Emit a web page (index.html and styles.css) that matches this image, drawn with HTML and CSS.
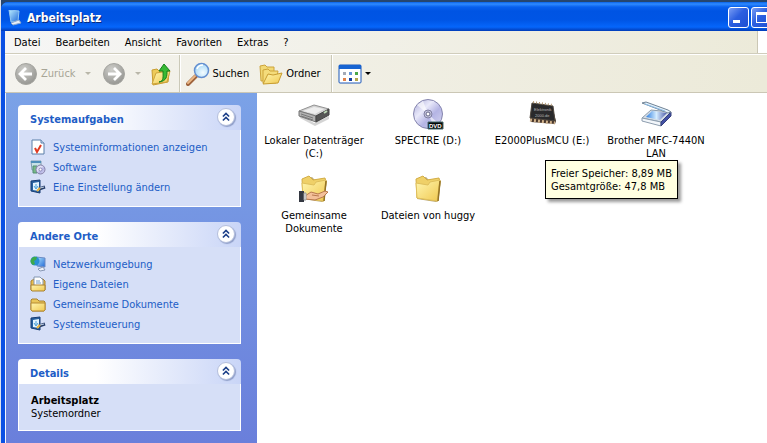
FILE: index.html
```html
<!DOCTYPE html>
<html lang="de">
<head>
  <meta charset="UTF-8">
  <title>Arbeitsplatz</title>
  <link rel="stylesheet" href="styles.css">
</head>
<body>

<!-- shared shapes and colours -->
<svg class="defs" aria-hidden="true">
  <defs>
    <linearGradient id="gold" x1="0" y1="0" x2="1" y2="1">
      <stop offset="0" stop-color="#fff6b0"/><stop offset="1" stop-color="#f0c850"/>
    </linearGradient>
    <linearGradient id="screen" x1="0" y1="0" x2="1" y2="1">
      <stop offset="0" stop-color="#b8ecff"/><stop offset="1" stop-color="#2068d8"/>
    </linearGradient>
    <radialGradient id="grey" cx=".4" cy=".3" r=".8">
      <stop offset="0" stop-color="#cfcfcb"/><stop offset="1" stop-color="#8f8f8b"/>
    </radialGradient>
    <radialGradient id="lens" cx=".6" cy=".65" r=".7">
      <stop offset="0" stop-color="#f4fcff"/><stop offset="1" stop-color="#9fd4f6"/>
    </radialGradient>
    <linearGradient id="disc" x1="0" y1="0" x2="1" y2="1">
      <stop offset="0" stop-color="#a9a9d8"/><stop offset=".35" stop-color="#e9e9fa"/>
      <stop offset=".6" stop-color="#b4b4e4"/><stop offset="1" stop-color="#d8d8f2"/>
    </linearGradient>
    <linearGradient id="glass" x1="0" y1="0" x2="1" y2="0">
      <stop offset="0" stop-color="#2f7fe0"/><stop offset=".5" stop-color="#d4ecff"/><stop offset="1" stop-color="#4a58a8"/>
    </linearGradient>
    <symbol id="chevrons" viewBox="0 0 18 18">
      <path d="M5.500 8.500L9 5l3.500 3.500M5.500 13L9 9.500l3.500 3.500" fill="none" stroke="#1c3f88" stroke-width="1.800"/>
    </symbol>
    <symbol id="control" viewBox="0 0 16 16">
      <path d="M1 2l9-1v13l-9-2z" fill="#27609f" stroke="#173c74"/>
      <path d="M3 4l6-1v9l-6-1z" fill="#e4f4ff"/>
      <path d="M6 5v4M4 7l2 3 2-3" fill="none" stroke="#4aa0d8"/>
      <path d="M9 10l6-2" stroke="#263e69" stroke-width="3"/>
      <path d="M10 9l4-1" stroke="#c7d6e8"/>
      <path d="M7 12l3-3" stroke="#e8b13c" stroke-width="2"/>
    </symbol>
    <symbol id="folder" viewBox="0 0 32 32">
      <path d="M7 6l7-2 3 3 10-1 2 2-3 20-2 1L5 26z" fill="#9b8445" opacity=".7"/>
      <path d="M4 6l7-3 4 4 12-2 1 4-2 19L5 25z" fill="#efd068" stroke="#d3ad45"/>
      <path d="M4 10l12 2 2-3 10-2-3 21L5 25z" fill="url(#gold)" stroke="#dfbf5c"/>
      <path d="M26 28l2-20" stroke="#957324" stroke-width="1.500"/>
    </symbol>
  </defs>
</svg>

<div class="window">
  <header class="titlebar">
    <svg class="icon16" viewBox="0 0 16 16">
      <path d="M2 0l10 1-1 10-7 1z" fill="url(#screen)" stroke="#93c8f4"/>
      <path d="M4 13l8-3 2 3-8 2z" fill="#e7eef8" stroke="#8ca9cc"/>
    </svg>
    <h1>Arbeitsplatz</h1>
    <div class="window-buttons">
      <button type="button" aria-label="Minimieren"><span class="minimize"></span></button>
      <button type="button" aria-label="Maximieren"><span class="maximize"></span></button>
    </div>
  </header>

  <nav class="menubar">
    <button type="button">Datei</button>
    <button type="button">Bearbeiten</button>
    <button type="button">Ansicht</button>
    <button type="button">Favoriten</button>
    <button type="button">Extras</button>
    <button type="button">?</button>
    <span class="brand"></span>
  </nav>

  <div class="toolbar">
    <button type="button" class="tool" disabled>
      <svg class="icon24" viewBox="0 0 24 24">
        <circle cx="12" cy="12" r="10.500" fill="url(#grey)" stroke="#a5a5a0"/>
        <path d="M18 12H7M12 6l-6 6 6 6" fill="none" stroke="#fff" stroke-width="2.800"/>
      </svg>
      <span>Zurück</span>
    </button>
    <button type="button" class="drop" aria-label="Verlauf zurück" disabled><span class="caret"></span></button>
    <button type="button" class="tool forward" aria-label="Vorwärts" disabled>
      <svg class="icon24" viewBox="0 0 24 24">
        <circle cx="12" cy="12" r="10.500" fill="url(#grey)" stroke="#a5a5a0"/>
        <path d="M6 12h11M12 6l6 6-6 6" fill="none" stroke="#fff" stroke-width="2.800"/>
      </svg>
    </button>
    <button type="button" class="drop" aria-label="Verlauf vorwärts" disabled><span class="caret"></span></button>
    <button type="button" class="tool" aria-label="Aufwärts">
      <svg class="icon24" viewBox="0 0 24 24">
        <path d="M2 8l5-1 2 2h8l2 2-1 9-15 3z" fill="#edcb59" stroke="#c89d31"/>
        <path d="M2 22l4-11 14-2-3 11z" fill="url(#gold)" stroke="#cda43b"/>
        <path d="M9 20c5-1 4-5 4-11H9l5-7 6 7h-3c0 5 0 10-8 11z" fill="#37b934" stroke="#16801b"/>
      </svg>
    </button>
    <span class="divider"></span>
    <button type="button" class="tool">
      <svg class="icon24" viewBox="0 0 24 24">
        <path d="M2 22l8-8" stroke="#9e623b" stroke-width="4" stroke-linecap="round"/>
        <path d="M2 21l7-7" stroke="#eab786" stroke-width="2" stroke-linecap="round"/>
        <circle cx="15.500" cy="8.500" r="7" fill="url(#lens)" stroke="#648fd0" stroke-width="1.500"/>
        <path d="M11 7c1-3 3-4 6-4" fill="none" stroke="#fff" stroke-width="1.500"/>
      </svg>
      <span>Suchen</span>
    </button>
    <button type="button" class="tool">
      <svg class="icon24" viewBox="0 0 24 24">
        <path d="M1 4l5-1 2 2h7v13l-13 1z" fill="#f1d875" stroke="#cda43b"/>
        <path d="M4 8l5-1 2 2h8l-2 12H4z" fill="#f4dc7b" stroke="#cda43b"/>
        <path d="M4 22l5-10 5 1 9-2-4 10z" fill="url(#gold)" stroke="#c89d31"/>
      </svg>
      <span>Ordner</span>
    </button>
    <span class="divider wide"></span>
    <button type="button" class="tool" aria-label="Ansichten">
      <svg class="icon24" viewBox="0 0 24 24">
        <rect x="1" y="3" width="22" height="18" rx="1" fill="#fff" stroke="#1b57b8"/>
        <path d="M1 3h22v4H1z" fill="#1764d2"/>
        <path d="M5 10h3v3H5z" fill="#a4aab6"/><path d="M11 10h3v3h-3z" fill="#6696d8"/><path d="M17 10h3v3h-3z" fill="#4aa747"/>
        <path d="M5 16h3v3H5z" fill="#e28249"/><path d="M11 16h3v3h-3z" fill="#173fa0"/><path d="M17 16h3v3h-3z" fill="#b5a64c"/>
      </svg>
      <span class="caret"></span>
    </button>
  </div>

  <div class="content">
    <aside class="sidebar">
      <section class="panel">
        <div class="panel-head">
          <h2>Systemaufgaben</h2>
          <button type="button" class="collapse" aria-label="Systemaufgaben einklappen"><svg><use href="#chevrons"/></svg></button>
        </div>
        <ul class="links">
          <li><a href="#">
            <svg class="icon16" viewBox="0 0 16 16">
              <path d="M2 1h9l3 3v11H2z" fill="#fff" stroke="#5b7fa8"/>
              <path d="M11 1v3h3" fill="#c9dcf2" stroke="#5b7fa8"/>
              <path d="M5 9l2 4 4-7" fill="none" stroke="#e03a22" stroke-width="2"/>
            </svg>Systeminformationen anzeigen</a></li>
          <li><a href="#">
            <svg class="icon16" viewBox="0 0 16 16">
              <path d="M1 2h10v9H2z" fill="#c7e2e7" stroke="#809fb2"/>
              <path d="M1 2h10v2H1z" fill="#4f8fba"/>
              <path d="M3 7h4v7H3z" fill="#77ba86" stroke="#558d75"/>
              <circle cx="10.500" cy="10.500" r="4.500" fill="url(#disc)" stroke="#8782a9"/>
              <circle cx="10.500" cy="10.500" r="1.500" fill="#fff" stroke="#8e89b8"/>
            </svg>Software</a></li>
          <li><a href="#"><svg class="icon16"><use href="#control"/></svg>Eine Einstellung ändern</a></li>
        </ul>
      </section>

      <section class="panel">
        <div class="panel-head">
          <h2>Andere Orte</h2>
          <button type="button" class="collapse" aria-label="Andere Orte einklappen"><svg><use href="#chevrons"/></svg></button>
        </div>
        <ul class="links">
          <li><a href="#">
            <svg class="icon16" viewBox="0 0 16 16">
              <path d="M6 1l9 1v9l-8-1z" fill="url(#screen)" stroke="#6c8bc4"/>
              <path d="M8 13l5-2 2 3-5 1z" fill="#eef2f8" stroke="#8797b5"/>
              <circle cx="5" cy="5" r="4.500" fill="#298fd6"/>
              <path d="M2 2c2-2 4-1 5-1L6 4 4 5l1 3-2 1C0 7 0 4 2 2z" fill="#3daa4b"/>
            </svg>Netzwerkumgebung</a></li>
          <li><a href="#">
            <svg class="icon16" viewBox="0 0 16 16">
              <path d="M1 5l3-2h9l2 2v9H1z" fill="#e9bf4c" stroke="#a88030"/>
              <path d="M4 1h6l3 3v7H4z" fill="#fff" stroke="#8295b1"/>
              <path d="M6 5h4M6 7h5" stroke="#6f9ccb"/>
              <path d="M1 9h14v5l-1 1H2l-1-1z" fill="url(#gold)" stroke="#a88030"/>
            </svg>Eigene Dateien</a></li>
          <li><a href="#">
            <svg class="icon16" viewBox="0 0 16 16">
              <path d="M1 4l1-1h5l2 2h5l1 1v8l-1 1H2l-1-1z" fill="#e9c65a" stroke="#a88030"/>
              <path d="M1 7h14v7l-1 1H2l-1-1z" fill="url(#gold)" stroke="#b68b32"/>
            </svg>Gemeinsame Dokumente</a></li>
          <li><a href="#"><svg class="icon16"><use href="#control"/></svg>Systemsteuerung</a></li>
        </ul>
      </section>

      <section class="panel">
        <div class="panel-head">
          <h2>Details</h2>
          <button type="button" class="collapse" aria-label="Details einklappen"><svg><use href="#chevrons"/></svg></button>
        </div>
        <div class="details">
          <strong>Arbeitsplatz</strong>
          <p>Systemordner</p>
        </div>
      </section>
    </aside>

    <main class="files">
      <div class="file">
        <svg class="icon32" viewBox="0 0 32 32">
          <path d="M2 16l14 9 15-7v3l-14 7L2 20z" fill="#aaa" opacity=".5"/>
          <path d="M1 13l15-6 15 4-13 7z" fill="#d2d2d2" stroke="#929292"/>
          <path d="M5 13l11-4 10 2-9 5z" fill="#eee"/>
          <path d="M1 13l17 5v6L1 18z" fill="#b1b1b1" stroke="#777"/>
          <path d="M18 18l13-7v6l-13 7z" fill="#555" stroke="#444"/>
          <path d="M3 16l12 4M3 18l12 4" stroke="#777"/>
          <path d="M26 15l3-2" stroke="#bcd8b6" stroke-width="2"/>
        </svg>
        <span>Lokaler Datenträger (C:)</span>
      </div>
      <div class="file">
        <svg class="icon32" viewBox="0 0 32 32">
          <circle cx="16" cy="16" r="14.500" fill="url(#disc)" stroke="#8585ad"/>
          <path d="M16 16L5 7l6-4zM16 16l10 9-4 3z" fill="#fff" opacity=".6"/>
          <circle cx="16" cy="16" r="4" fill="#c6c6df" stroke="#8080a2"/>
          <circle cx="16" cy="16" r="2" fill="#fff" stroke="#666687"/>
          <path d="M16 24h15v7H16z" fill="#050808" stroke="#42676a"/>
          <text x="17" y="30" class="disc-label">DVD</text>
        </svg>
        <span>SPECTRE (D:)</span>
      </div>
      <div class="file">
        <svg class="icon32" viewBox="0 0 32 32">
          <path d="M6 6l20 2 4 15-1 3-24-2-1-3z" fill="#49372c"/>
          <path d="M6 5l21 3 2 15-25-3z" fill="#29292b" stroke="#514940"/>
          <path d="M7 4l20 3" stroke="#b49a76" stroke-width="2" stroke-dasharray="1 2"/>
          <path d="M4 22l25 3" stroke="#d0b28b" stroke-width="3" stroke-dasharray="2 2"/>
          <text x="8" y="13" class="chip-label">Elektronik</text>
          <text x="9" y="19" class="chip-label">2000.de</text>
        </svg>
        <span>E2000PlusMCU (E:)</span>
        <div class="tooltip" role="tooltip">Freier Speicher: 8,89 MB<br>Gesamtgröße: 47,8 MB</div>
      </div>
      <div class="file">
        <svg class="icon32" viewBox="0 0 32 32">
          <path d="M2 20l9-8 20 2-10 10z" fill="#d4dde6" stroke="#8d9dae"/>
          <path d="M6 19l6-6 15 2-7 7z" fill="url(#glass)"/>
          <path d="M2 20l19 4v4L2 23z" fill="#f2f6fa" stroke="#8d9dae"/>
          <path d="M21 24l10-10v4l-10 10z" fill="#4250a5" stroke="#38427d"/>
          <path d="M2 5l4-1 22 8 3 2-3 1z" fill="#e6f2fb" stroke="#6f8396"/>
          <path d="M5 6l20 7" stroke="#8fbfe8"/>
        </svg>
        <span>Brother MFC-7440N LAN</span>
      </div>
      <div class="file">
        <svg class="icon32" viewBox="0 0 32 32">
          <use href="#folder"/>
          <path d="M7 23l6-4 7 2 7-3 3 1-5 5-8 3-10-1z" fill="#f3c09a" stroke="#b8794f"/>
          <path d="M14 22l7 1" stroke="#b8794f"/>
          <path d="M1 18h5v11H1z" fill="#343842"/>
          <path d="M6 20h2v7H6z" fill="#f5f5f5" stroke="#999"/>
        </svg>
        <span>Gemeinsame Dokumente</span>
      </div>
      <div class="file">
        <svg class="icon32"><use href="#folder"/></svg>
        <span>Dateien von huggy</span>
      </div>
    </main>
  </div>
</div>

</body>
</html>
```
FILE: styles.css
```css
* {
  box-sizing: border-box;
}
body {
  margin: 0;
  padding: 2px 0 0 1px;
  background: linear-gradient(90deg, #dfe3ee 1px, #26466f 1px);
  color: #000;
  font: 11px/13px "DejaVu Sans Condensed", Tahoma, sans-serif;
  overflow: hidden;
}
h1, h2, p, ul {
  margin: 0;
  padding: 0;
}
button {
  padding: 0;
  border: 0;
  background: none;
  color: inherit;
  font: inherit;
}
.defs {
  position: absolute;
  width: 0;
  height: 0;
}
.icon16, .icon24, .icon32 {
  display: block;
  flex: none;
  width: 16px;
  height: 16px;
}
.icon24 {
  width: 24px;
  height: 24px;
}
.icon32 {
  width: 32px;
  height: 32px;
}
.window {
  display: flex;
  flex-direction: column;
  min-height: calc(100vh - 2px);
  border-left: 4px solid #0a50e4;
  border-radius: 7px 0 0 0;
  background: #0a50e4;
}

/* title bar */
.titlebar {
  display: flex;
  align-items: center;
  gap: 4px;
  height: 29px;
  margin-left: -4px;
  padding: 2px 0 0 6px;
  border-radius: 7px 0 0 0;
  background: linear-gradient(#0a63e8 0, #2f8bff 2px, #0860ee 5px, #0054e3 9px, #0055e5 18px, #0566fb 25px, #0450d8 27px, #003bb8 29px);
}
.titlebar h1 {
  color: #fff;
  font: bold 12px/18px "DejaVu Sans Condensed", sans-serif;
  text-shadow: 1px 1px #0a2b7c;
}
.window-buttons {
  display: flex;
  gap: 2px;
  margin: 0 -5px 0 auto;
}
.window-buttons button {
  display: flex;
  width: 21px;
  height: 21px;
  padding: 4px;
  border: 1px solid #fff;
  border-radius: 3px;
  background: linear-gradient(135deg, #7a9df4, #2c5fe0 45%, #1e50d2);
}
.minimize {
  align-self: flex-end;
  width: 7px;
  height: 3px;
  background: #fff;
}
.maximize {
  width: 11px;
  height: 11px;
  border: 1px solid #fff;
  border-top-width: 3px;
}

/* menu and toolbar */
.menubar {
  display: flex;
  align-items: center;
  gap: 15px;
  height: 23px;
  padding-left: 9px;
  border-bottom: 1px solid #d0cdbc;
  background: linear-gradient(90deg, #f6f6f5, #ecead9);
}
.brand {
  align-self: stretch;
  width: 10px;
  margin-left: auto;
  border-left: 1px solid #cbc7b5;
  background: #fff;
}
.toolbar {
  display: flex;
  align-items: center;
  height: 39px;
  padding-left: 9px;
  border-top: 1px solid #fff;
  border-bottom: 1px solid #cbc7b5;
  background: linear-gradient(90deg, #f4f3ee, #ecead9);
}
.tool {
  display: flex;
  align-items: center;
  gap: 3px;
}
.tool + .tool {
  margin-left: 10px;
}
.tool:disabled {
  color: #a7a596;
}
.forward {
  margin-left: 2px;
}
.drop {
  padding: 9px;
}
.caret {
  display: block;
  border: 3px solid transparent;
  border-top-color: #000;
  border-bottom: 0;
}
.drop .caret {
  border-top-color: #b9b7a9;
}
.divider {
  align-self: stretch;
  width: 2px;
  margin: 0 5px;
  border-left: 1px solid #cbc9b8;
  border-right: 1px solid #fff;
}
.wide {
  margin-left: 10px;
}

/* blue task pane */
.content {
  display: flex;
  flex: 1;
  border-left: 1px solid #f4f6fc;
}
.sidebar {
  display: flex;
  flex: none;
  flex-direction: column;
  gap: 15px;
  width: 251px;
  padding: 12px 16px 12px 12px;
  background: linear-gradient(#7ba2e7, #6a7fdb);
}
.panel-head {
  display: flex;
  align-items: center;
  justify-content: space-between;
  height: 25px;
  padding: 0 6px 2px 12px;
  border-radius: 4px 4px 0 0;
  background: linear-gradient(90deg, #fff 35%, #c9d5f7);
}
.panel-head h2 {
  padding-top: 6px;
  color: #215dc6;
  font-size: 11px;
  line-height: 13px;
}
.collapse {
  width: 18px;
  height: 18px;
  border: 1px solid #b5bfdc;
  border-radius: 50%;
  background: #fff;
  box-shadow: 1px 1px 1px #8f9ec8;
}
.collapse svg {
  display: block;
  width: 16px;
  height: 16px;
}
.links, .details {
  border: 1px solid #fff;
  border-top: 0;
  background: #d6dff7;
}
.links {
  padding: 7px 11px 9px;
  list-style: none;
}
.links a {
  display: flex;
  align-items: center;
  gap: 7px;
  height: 20px;
  color: #215dc6;
  text-decoration: none;
}
.details {
  padding: 10px 12px;
}
.details strong {
  display: block;
}

/* file icons */
.files {
  display: grid;
  flex: 1;
  grid-template-columns: repeat(auto-fill, 114px);
  grid-auto-rows: 75px;
  align-content: start;
  padding-top: 5px;
  background: #fff;
}
.file {
  position: relative;
  display: flex;
  flex-direction: column;
  align-items: center;
  gap: 4px;
  padding: 0 6px;
  text-align: center;
}
.disc-label {
  fill: #fff;
  font: bold 6px "Liberation Sans", sans-serif;
}
.chip-label {
  fill: #b8b8b8;
  font: 4px "Liberation Sans", sans-serif;
}
.tooltip {
  position: absolute;
  top: 62px;
  left: 60px;
  z-index: 1;
  padding: 6px 5px 5px;
  border: 1px solid #000;
  background: #ffffe1;
  box-shadow: 3px 3px 3px rgba(0, 0, 0, .4);
  text-align: left;
  white-space: nowrap;
}
```
